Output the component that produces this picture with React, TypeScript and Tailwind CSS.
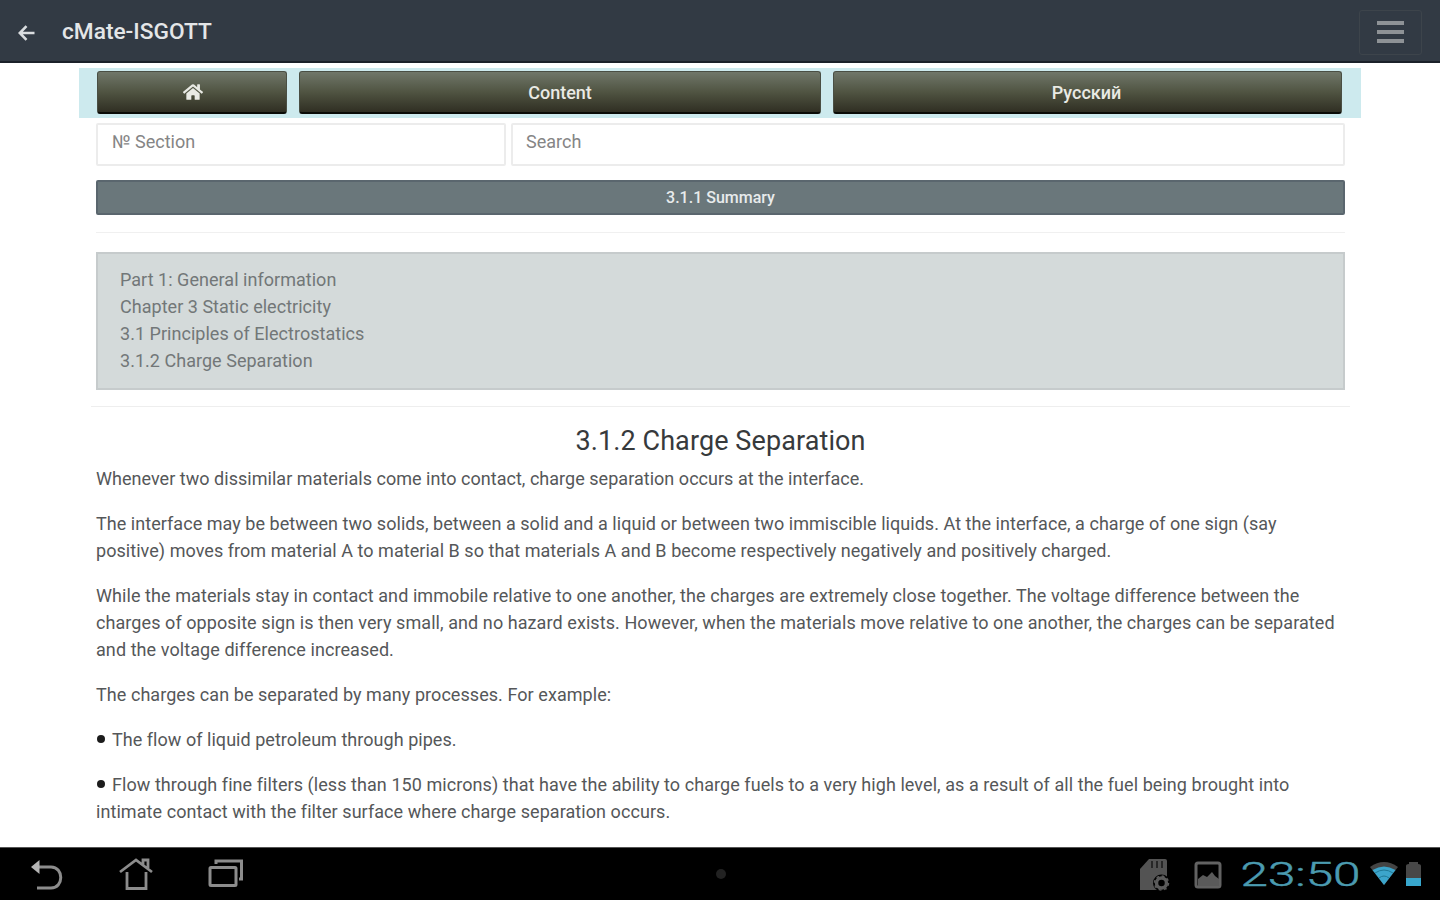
import { useState } from "react";
import { FaHome } from "react-icons/fa";

const BREADCRUMBS = [
  "Part 1: General information",
  "Chapter 3 Static electricity",
  "3.1 Principles of Electrostatics",
  "3.1.2 Charge Separation",
];

interface Paragraph {
  lines: string[];
  bullet?: boolean;
  tracking: string;
}

const PARAGRAPHS: Paragraph[] = [
  {
    lines: ["Whenever two dissimilar materials come into contact, charge separation occurs at the interface."],
    tracking: "tracking-[0.03px]",
  },
  {
    lines: [
      "The interface may be between two solids, between a solid and a liquid or between two immiscible liquids. At the interface, a charge of one sign (say",
      "positive) moves from material A to material B so that materials A and B become respectively negatively and positively charged.",
    ],
    tracking: "tracking-[0.045px]",
  },
  {
    lines: [
      "While the materials stay in contact and immobile relative to one another, the charges are extremely close together. The voltage difference between the",
      "charges of opposite sign is then very small, and no hazard exists. However, when the materials move relative to one another, the charges can be separated",
      "and the voltage difference increased.",
    ],
    tracking: "tracking-[0.075px]",
  },
  {
    lines: ["The charges can be separated by many processes. For example:"],
    tracking: "tracking-[0.06px]",
  },
  {
    lines: ["The flow of liquid petroleum through pipes."],
    bullet: true,
    tracking: "tracking-[0.04px]",
  },
  {
    lines: [
      "Flow through fine filters (less than 150 microns) that have the ability to charge fuels to a very high level, as a result of all the fuel being brought into",
      "intimate contact with the filter surface where charge separation occurs.",
    ],
    bullet: true,
    tracking: "tracking-[0.065px]",
  },
];

const NAV_BUTTON =
  "flex h-[43px] items-center justify-center rounded-[3px] border border-[#4a4f44] border-b-2 border-b-[#0b0c08] bg-linear-to-b from-[#70776a] via-[#505442] to-[#302f23] text-[18px] font-medium text-[#e9eae4]";

function Header() {
  return (
    <header className="flex h-[63px] items-center border-b-2 border-[#1b2129] bg-[#323a44] pl-[18px] pr-[18px]">
      <button type="button" aria-label="Back" className="mt-[5px]">
        <svg width="17" height="16" viewBox="0 0 17 16" fill="none" stroke="#d9dcdf" strokeWidth="2.6">
          <path d="M16.5 8H2M8.5 1.2 1.8 8l6.7 6.8" />
        </svg>
      </button>
      <h1 className="ml-[27px] mt-[3px] flex-1 text-[22.7px] font-medium leading-none text-[#e4e6e8]">cMate-ISGOTT</h1>
      <button
        type="button"
        aria-label="Menu"
        className="mt-[3px] flex h-[45px] w-[63px] flex-col items-center justify-center gap-[5px] rounded-[3px] border border-[#3d444b]"
      >
        <span className="h-[4px] w-[27px] bg-[#8e9296]" />
        <span className="h-[4px] w-[27px] bg-[#8e9296]" />
        <span className="h-[4px] w-[27px] bg-[#8e9296]" />
      </button>
    </header>
  );
}

function SystemBar() {
  return (
    <footer className="flex h-[53px] shrink-0 items-center justify-between border-t border-[#555] bg-black">
      <svg width="260" height="52" viewBox="0 0 260 52" fill="none" stroke="#8c8c8c" strokeWidth="3">
        {/* back */}
        <path d="M36 19H51C64 19 64 40 51 40H37" />
        <path d="M39.500 12V26L31 19Z" fill="#b5b5b5" stroke="none" />
        {/* home */}
        <path d="M120 24 136 12 152 24M127 24V40.500H146V24M143 17V12H148V20" strokeWidth="2.8" />
        {/* recents */}
        <rect x="210" y="19.500" width="26" height="18" rx="1" />
        <path d="M216 16V13H241.500V31H239" />
      </svg>

      <span className="ml-[51px] size-[10px] rounded-full bg-[#222]" />

      <svg width="310" height="52" viewBox="1130 0 310 52">
        {/* sd card with gear */}
        <path d="M1140 42V21L1149 11H1165Q1167 11 1167 13V42Z" fill="#535353" />
        <path d="M1152 13V20M1157 13V20M1162 13V20" stroke="#272727" strokeWidth="2" />
        <circle cx="1161.500" cy="35" r="8.500" fill="#000" />
        <circle cx="1161.500" cy="35" r="5" fill="none" stroke="#5b5b5b" strokeWidth="3.500" />
        <circle cx="1161.500" cy="35" r="7" fill="none" stroke="#5b5b5b" strokeWidth="1.500" strokeDasharray="2.800 2.700" />
        {/* picture */}
        <rect x="1196" y="15" width="24" height="24" rx="2" fill="none" stroke="#626262" strokeWidth="3" />
        <path d="M1198 31 1203 27 1207 29 1212 24 1215 28 1219 31V38H1198Z" fill="#5a5a5a" />
        <text
          x="1240.500"
          y="38"
          fill="#4b9bb0"
          stroke="#4b9bb0"
          strokeWidth="0.5"
          fontSize="34"
          fontWeight="300"
          textLength="120"
          lengthAdjust="spacingAndGlyphs"
        >
          23:50
        </text>
        {/* wifi */}
        <path d="M1370 19Q1384 9 1398 19L1384 37Z" fill="#444" />
        <path d="M1372.500 22Q1384 15 1395.500 22L1384 37Z" fill="#3ca5cb" />
        <path d="M1375 25Q1384 19 1393 25M1379 30Q1384 26 1389 30" fill="none" stroke="#1f7896" strokeWidth="1" />
        {/* battery */}
        <path d="M1406 38V18Q1406 16 1409 16V14H1418V16Q1421 16 1421 18V38Z" fill="#484848" />
        <rect x="1406" y="30" width="15" height="8" fill="#38a7cd" />
      </svg>
    </footer>
  );
}

export default function App() {
  const [section, setSection] = useState("");
  const [query, setQuery] = useState("");

  return (
    <div className="flex h-[900px] w-[1440px] flex-col overflow-hidden bg-white font-[Roboto,sans-serif]">
      <Header />

      <main className="flex-1 overflow-hidden pt-[5px]">
        {/* Navigation */}
        <nav className="mx-[79px] flex h-[50px] gap-[12px] bg-[#cdeaee] pl-[18px] pr-[19px] pt-[3px]">
          <button type="button" aria-label="Home" className={`${NAV_BUTTON} w-[190px]`}>
            <FaHome size={20} className="ml-[2px]" />
          </button>
          <button type="button" className={`${NAV_BUTTON} w-[522px]`}>Content</button>
          <button type="button" className={`${NAV_BUTTON} flex-1 pr-[2px]`}>Русский</button>
        </nav>

        <div className="ml-[96px] mr-[95px]">
          {/* Search fields */}
          <div className="mt-[5px] flex gap-[5px]">
            <input
              value={section}
              onChange={(e) => setSection(e.target.value)}
              placeholder="№ Section"
              className="h-[43px] w-[410px] rounded-[2px] border-2 border-[#ececec] pb-[7px] pl-[14px] text-[18px] placeholder:text-[#858585]"
            />
            <input
              value={query}
              onChange={(e) => setQuery(e.target.value)}
              placeholder="Search"
              className="h-[43px] flex-1 rounded-[2px] border-2 border-[#ececec] pb-[7px] pl-[13px] text-[18px] placeholder:text-[#858585]"
            />
          </div>

          <div className="mt-[14px] flex h-[35px] items-center justify-center rounded-[2px] border-2 border-[#5a666e] bg-[#6a777b] text-[16px] font-medium text-[#e8ebec]">
            3.1.1 Summary
          </div>

          <hr className="mt-[17px] border-[#f0f0f0]" />

          {/* Breadcrumbs */}
          <div className="mt-[19px] h-[138px] border-2 border-[#c6cbcc] bg-[#d4dada] pl-[22px] pt-[12px] text-[18px] leading-[27px] tracking-[0.03px] text-[#727778]">
            {BREADCRUMBS.map((item) => (
              <p key={item}>{item}</p>
            ))}
          </div>

          <hr className="-mx-[5px] mt-[16px] border-[#eeeeee]" />

          <h2 className="mt-[18px] text-center text-[27px] leading-[32px] tracking-[0.1px] text-[#373a3c]">
            3.1.2 Charge Separation
          </h2>

          <div className="mt-[8px] space-y-[18px] whitespace-nowrap text-[18px] leading-[27px] text-[#555759]">
            {PARAGRAPHS.map(({ lines, bullet, tracking }) => (
              <p key={lines[0]} className={tracking}>
                {lines.map((line, i) => (
                  <span key={line} className="block">
                    {bullet && i === 0 && (
                      <span className="ml-[1px] mr-[7px] inline-block size-[8px] rounded-full bg-[#1c1c1c] align-[3px]" />
                    )}
                    {line}
                  </span>
                ))}
              </p>
            ))}
          </div>
        </div>
      </main>

      <SystemBar />
    </div>
  );
}
